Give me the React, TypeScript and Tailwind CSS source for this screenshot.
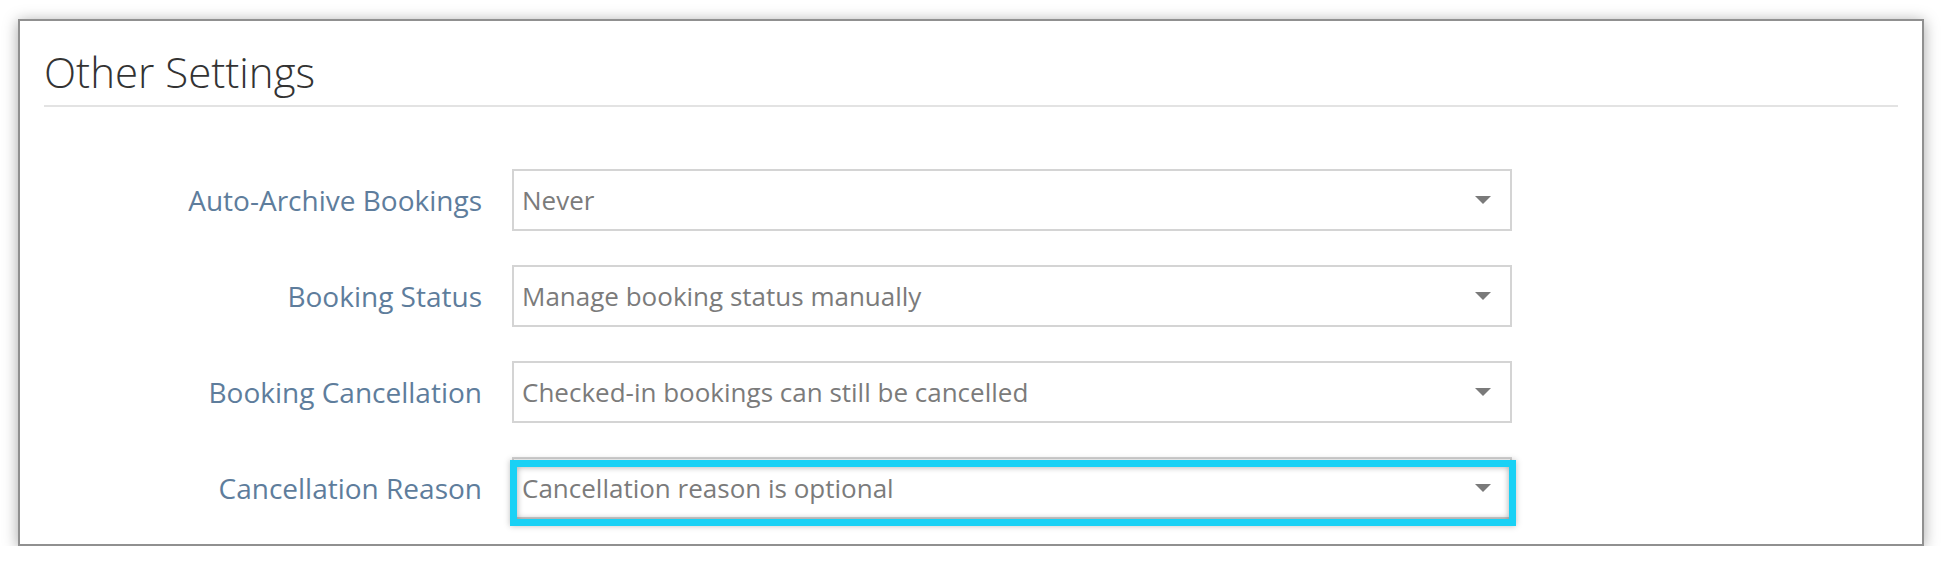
const rows = [
  { label: "Auto-Archive Bookings", value: "Never" },
  { label: "Booking Status", value: "Manage booking status manually" },
  { label: "Booking Cancellation", value: "Checked-in bookings can still be cancelled" },
  { label: "Cancellation Reason", value: "Cancellation reason is optional", focused: true },
];

function Caret() {
  return (
    <svg width="16" height="8" viewBox="0 0 16 8" className="shrink-0">
      <polygon points="0,0 16,0 8,8" fill="#7a7a7a" />
    </svg>
  );
}

export default function App() {
  return (
    <div className="bg-white pt-[19px] px-[18px] font-['Open_Sans',sans-serif]">
      <div className="h-[527px] border-2 border-[#909090] bg-white px-[24px] shadow-[0_2px_14px_rgba(0,0,0,0.35)] overflow-hidden">
        <h1 className="mt-[27px] text-[42px] leading-[48px] font-light text-[#333333]">
          Other Settings
        </h1>
        <div className="mt-[9px] h-[2px] bg-[#e3e3e3]" />

        <div className="mt-[62px] flex flex-col gap-[34px]">
          {rows.map((row) => (
            <div key={row.label} className="flex items-center gap-[30px]">
              <label className="w-[438px] text-right text-[28px] leading-[40px] text-[#5e7d9c]">
                {row.label}
              </label>
              <div className="relative">
                <div className="w-[1000px] h-[62px] border-2 border-[#d4d4d4] bg-white flex items-center justify-between pl-[8px] pr-[19px]">
                  <span className="text-[26px] leading-[36px] text-[#7b7b7b]">{row.value}</span>
                  <Caret />
                </div>
                {row.focused && (
                  <div className="absolute left-[-2px] top-[3px] w-[1006px] h-[66px] border-[7px] border-[#19d1f5] shadow-[inset_0_0_6px_rgba(0,0,0,0.35),0_0_6px_rgba(0,0,0,0.25)] pointer-events-none" />
                )}
              </div>
            </div>
          ))}
        </div>
      </div>
    </div>
  );
}
